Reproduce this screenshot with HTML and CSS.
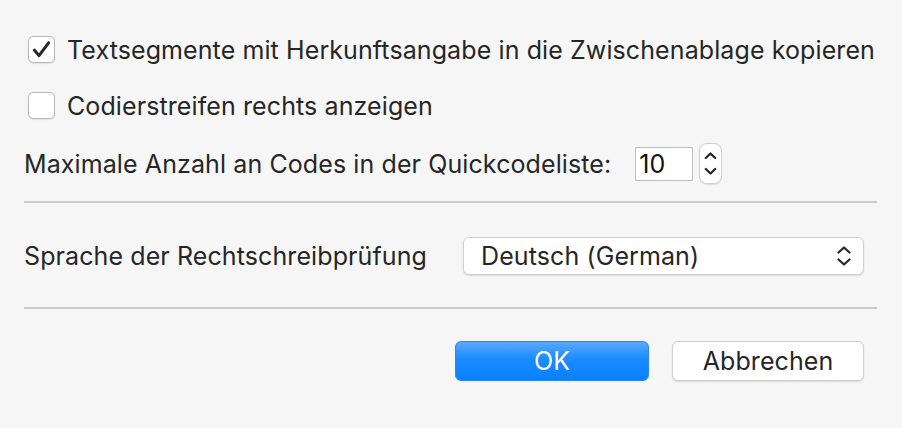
FILE: index.html
```html
<!DOCTYPE html>
<html lang="de">
<head>
<meta charset="utf-8">
<title>Einstellungen</title>
<link rel="stylesheet" href="styles.css">
</head>
<body>
<div class="dialog">
  <div class="check-row first">
    <span class="checkbox">
      <svg viewBox="0 0 27 27" width="27" height="27"><path d="M6.5 14.2 L11 19.6 L20.6 6.8" fill="none" stroke="#262626" stroke-width="3" stroke-linecap="round" stroke-linejoin="round"/></svg>
    </span>
    <span class="label">Textsegmente mit Herkunftsangabe in die Zwischenablage kopieren</span>
  </div>
  <div class="check-row second">
    <span class="checkbox"></span>
    <span class="label">Codierstreifen rechts anzeigen</span>
  </div>
  <div class="number-row">
    <span class="label">Maximale Anzahl an Codes in der Quickcodeliste:</span>
    <span class="number-field">10</span>
    <span class="stepper">
      <svg viewBox="0 0 23 41" width="23" height="41"><path d="M6.8 15 L11.5 10.5 L16.2 15" fill="none" stroke="#262626" stroke-width="2.3" stroke-linecap="round" stroke-linejoin="round"/><path d="M6.8 26 L11.5 30.5 L16.2 26" fill="none" stroke="#262626" stroke-width="2.3" stroke-linecap="round" stroke-linejoin="round"/></svg>
    </span>
  </div>
  <div class="separator sep1"></div>
  <div class="popup-row">
    <span class="label">Sprache der Rechtschreibprüfung</span>
    <span class="popup">
      <span class="popup-text">Deutsch (German)</span>
      <svg class="popup-arrows" viewBox="0 0 16 24" width="16" height="24"><path d="M2.5 8.5 L8 3.5 L13.5 8.5" fill="none" stroke="#262626" stroke-width="2.2" stroke-linecap="round" stroke-linejoin="round"/><path d="M2.5 15.5 L8 20.5 L13.5 15.5" fill="none" stroke="#262626" stroke-width="2.2" stroke-linecap="round" stroke-linejoin="round"/></svg>
    </span>
  </div>
  <div class="separator sep2"></div>
  <div class="button-row">
    <button class="btn primary">OK</button>
    <button class="btn secondary">Abbrechen</button>
  </div>
</div>
</body>
</html>
```

FILE: styles.css
```css
html, body {
  margin: 0;
  padding: 0;
  background: #f6f6f6;
}
body {
  width: 902px;
  height: 428px;
  overflow: hidden;
  font-family: "Inter", "Noto Sans", sans-serif;
  font-size: 25px;
  color: #262626;
}
.dialog {
  display: flex;
  flex-direction: column;
  padding: 36px 25px 0 24px;
}
.label {
  white-space: nowrap;
  letter-spacing: 0.1px;
}
.check-row {
  display: flex;
  align-items: center;
  height: 27px;
  padding-left: 4px;
}
.check-row .label {
  margin-left: 12px;
}
.check-row.second {
  margin-top: 29px;
}
.checkbox {
  width: 27px;
  height: 27px;
  box-sizing: border-box;
  border: 1px solid #b9b9b9;
  border-radius: 5px;
  background: #ffffff;
  box-shadow: 0 0.5px 1px rgba(0,0,0,0.08);
  display: flex;
  align-items: center;
  justify-content: center;
  flex: none;
}
.checkbox svg {
  display: block;
  margin: -1px;
}
.number-row {
  display: flex;
  align-items: center;
  margin-top: 24px;
  height: 41px;
}
.number-field {
  margin-left: 24px;
  width: 58px;
  height: 34px;
  box-sizing: border-box;
  border: 1px solid #bdbdbd;
  background: #fff;
  padding-left: 3px;
  line-height: 32px;
  color: #111;
  letter-spacing: 0.1px;
}
.stepper {
  margin-left: 6px;
  width: 23px;
  height: 41px;
  box-sizing: border-box;
  border: 1px solid #d0d0d0;
  border-radius: 8px;
  background: #fff;
  box-shadow: 0 0.5px 1px rgba(0,0,0,0.1);
  display: flex;
}
.stepper svg {
  display: block;
  margin: -1px;
}
.separator {
  height: 2px;
  background: #cbcbcb;
  width: 853px;
}
.sep1 {
  margin-top: 17px;
}
.popup-row {
  display: flex;
  align-items: center;
  justify-content: space-between;
  margin-top: 34px;
  height: 38px;
  width: 840px;
}
.popup {
  width: 401px;
  height: 38px;
  box-sizing: border-box;
  border: 1px solid #d2d2d2;
  border-radius: 6px;
  background: #fff;
  box-shadow: 0 1px 1.5px rgba(0,0,0,0.12);
  display: flex;
  align-items: center;
  justify-content: space-between;
  padding: 0 11px 0 17px;
  letter-spacing: 0.1px;
}
.popup-arrows {
  display: block;
}
.sep2 {
  margin-top: 32px;
}
.button-row {
  display: flex;
  gap: 23px;
  margin-top: 32px;
  padding-left: 431px;
}
.btn {
  height: 40px;
  box-sizing: border-box;
  font-family: inherit;
  font-size: 25px;
  border-radius: 6px;
  padding: 0;
  margin: 0;
  letter-spacing: 0.1px;
}
.primary {
  width: 194px;
  border: 1px solid #2a86f5;
  background: linear-gradient(#5aa8ff, #1a8cff 45%, #0a80ff);
  color: #fff;
}
.secondary {
  width: 192px;
  border: 1px solid #d0d0d0;
  background: #fff;
  color: #262626;
  box-shadow: 0 1px 1.5px rgba(0,0,0,0.12);
}
```
